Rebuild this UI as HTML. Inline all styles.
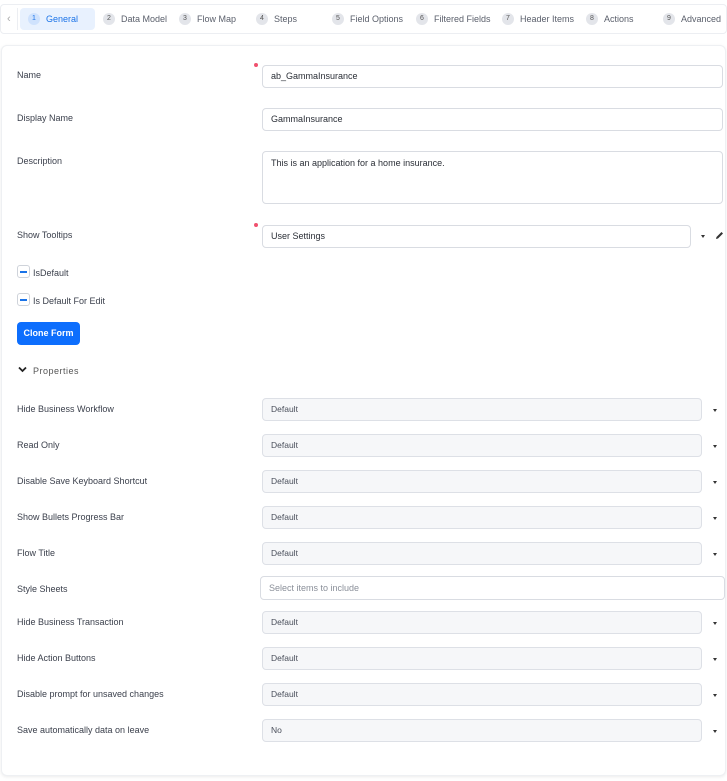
<!DOCTYPE html>
<html><head><meta charset="utf-8"><style>
*{box-sizing:border-box;margin:0;padding:0}
body{width:727px;height:781px;background:#fff;font-family:"Liberation Sans",sans-serif;font-size:9px;color:#3a3f4b;position:relative;overflow:hidden}
.a{position:absolute}
.tabs{left:0;top:4px;width:727px;height:30px;border:1px solid #eceef2;border-radius:4px;background:#fff}
.tab{position:absolute;top:8px;height:22px;display:flex;align-items:center;color:#5a5f6b;font-size:9px;white-space:nowrap}
.num{display:inline-block;width:12px;height:12px;border-radius:50%;background:#e3e5ea;font-size:7px;line-height:12px;text-align:center;color:#555;margin-right:6px}
.card{left:1px;top:45px;width:725px;height:731px;border:1px solid #eef0f3;border-radius:6px;box-shadow:0 1px 3px rgba(0,0,0,.08);background:#fff}
.lbl{position:absolute;left:17px;font-size:9px;color:#3a3f4b;margin-top:1px}
.inp{position:absolute;left:262px;width:461px;height:23px;border:1px solid #d9dce2;border-radius:4px;background:#fff;padding:0 8px;line-height:21px;font-size:9px;color:#2a2e36}
.sel{position:absolute;left:262px;width:440px;height:23px;border:1px solid #dde0e6;border-radius:4px;background:#f6f7f9;padding:0 8px;line-height:21px;font-size:8.5px;color:#4a4f5b}
.ar{position:absolute;left:713px;width:0;height:0;border-left:2.5px solid transparent;border-right:2.5px solid transparent;border-top:3px solid #333}
.star{position:absolute;left:254px;width:4px;height:4px;border-radius:50%;background:#f0506e}
.cb{position:absolute;left:17px;width:13px;height:13px;border:1px solid #cfd3da;border-radius:3px;background:#fff}
.cb:after{content:"";position:absolute;left:2px;top:5px;width:7px;height:2px;background:#1a73e8}
</style></head><body>
<div class="a tabs"></div>
<div class="a" style="left:7px;top:13px;color:#aaa;font-size:11px">‹</div>
<div class="a" style="left:17px;top:8px;width:1px;height:22px;background:#eceef2"></div>
<div class="a" style="left:20px;top:8px;width:75px;height:22px;background:#e8f1fe;border-radius:4px"></div>
<div class="tab" style="left:28px;color:#1a73e8"><span class="num" style="background:#cfe2fd;color:#1a73e8">1</span>General</div>
<div class="tab" style="left:103px"><span class="num">2</span>Data Model</div>
<div class="tab" style="left:179px"><span class="num">3</span>Flow Map</div>
<div class="tab" style="left:256px"><span class="num">4</span>Steps</div>
<div class="tab" style="left:332px"><span class="num">5</span>Field Options</div>
<div class="tab" style="left:416px"><span class="num">6</span>Filtered Fields</div>
<div class="tab" style="left:502px"><span class="num">7</span>Header Items</div>
<div class="tab" style="left:586px"><span class="num">8</span>Actions</div>
<div class="tab" style="left:663px"><span class="num">9</span>Advanced</div>

<div class="a card"></div>
<div class="lbl" style="top:69px">Name</div>
<div class="star" style="top:63px"></div>
<div class="inp" style="top:65px">ab_GammaInsurance</div>
<div class="lbl" style="top:112px">Display Name</div>
<div class="inp" style="top:108px">GammaInsurance</div>
<div class="lbl" style="top:155px">Description</div>
<div class="inp" style="top:151px;height:53px;line-height:22px">This is an application for a home insurance.</div>
<div class="lbl" style="top:229px">Show Tooltips</div>
<div class="star" style="top:223px"></div>
<div class="inp" style="top:225px;width:429px">User Settings</div>
<div class="ar" style="left:701px;top:235px"></div>
<svg class="a" style="left:715px;top:231px" width="9" height="9" viewBox="0 0 9 9"><path d="M1 8 L1.5 6 L6.5 1 L8 2.5 L3 7.5 Z" fill="#333"/></svg>
<div class="cb" style="top:265px"></div><div class="lbl" style="left:33px;top:267px">IsDefault</div>
<div class="cb" style="top:293px"></div><div class="lbl" style="left:33px;top:295px">Is Default For Edit</div>
<div class="a" style="left:17px;top:322px;width:63px;height:23px;background:#0d6efd;border-radius:4px;color:#fff;font-size:9px;font-weight:bold;text-align:center;line-height:23px">Clone Form</div>
<svg class="a" style="left:18px;top:366px" width="9" height="7" viewBox="0 0 9 7"><path d="M1 1.5 L4.5 5 L8 1.5" stroke="#222" stroke-width="1.8" fill="none"/></svg>
<div class="lbl" style="left:33px;top:365px;letter-spacing:.5px;color:#555">Properties</div>

<div class="lbl" style="top:403px">Hide Business Workflow</div><div class="sel" style="top:398px">Default</div><div class="ar" style="top:409px"></div>
<div class="lbl" style="top:439px">Read Only</div><div class="sel" style="top:434px">Default</div><div class="ar" style="top:445px"></div>
<div class="lbl" style="top:475px">Disable Save Keyboard Shortcut</div><div class="sel" style="top:470px">Default</div><div class="ar" style="top:481px"></div>
<div class="lbl" style="top:511px">Show Bullets Progress Bar</div><div class="sel" style="top:506px">Default</div><div class="ar" style="top:517px"></div>
<div class="lbl" style="top:547px">Flow Title</div><div class="sel" style="top:542px">Default</div><div class="ar" style="top:553px"></div>
<div class="lbl" style="top:583px">Style Sheets</div><div class="inp" style="top:576px;left:260px;width:465px;height:24px;line-height:22px;color:#8a8f99">Select items to include</div>
<div class="lbl" style="top:616px">Hide Business Transaction</div><div class="sel" style="top:611px">Default</div><div class="ar" style="top:622px"></div>
<div class="lbl" style="top:652px">Hide Action Buttons</div><div class="sel" style="top:647px">Default</div><div class="ar" style="top:658px"></div>
<div class="lbl" style="top:688px">Disable prompt for unsaved changes</div><div class="sel" style="top:683px">Default</div><div class="ar" style="top:694px"></div>
<div class="lbl" style="top:724px">Save automatically data on leave</div><div class="sel" style="top:719px">No</div><div class="ar" style="top:730px"></div>
</body></html>
